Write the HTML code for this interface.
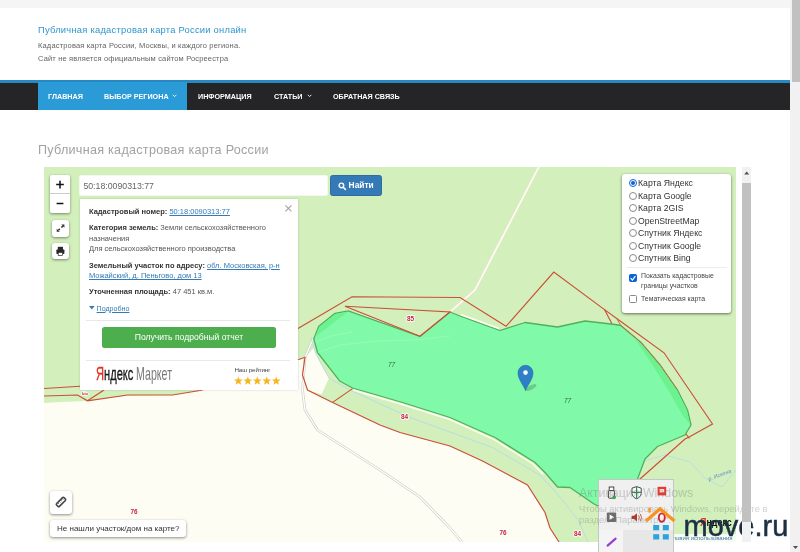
<!DOCTYPE html>
<html lang="ru">
<head>
<meta charset="utf-8">
<title>Публичная кадастровая карта России онлайн</title>
<style>
*{box-sizing:border-box;margin:0;padding:0}
html,body{width:800px;height:552px;overflow:hidden;background:#fff;font-family:"Liberation Sans",sans-serif;}
.abs{position:absolute}
#page{will-change:transform;position:relative;width:800px;height:552px;overflow:hidden;background:#fff}
#topstrip{left:0;top:0;width:790px;height:7.5px;background:#f5f5f5}
#oscroll{left:790px;top:0;width:10px;height:552px;background:#f1f1f1}
#oscroll .thumb{left:2px;top:0;width:8px;height:82px;background:#c1c1c1}
#title{left:38px;top:21.6px;font-size:9.4px;letter-spacing:0.23px;color:#2f96cf;white-space:nowrap;line-height:15px}
.sub{left:38px;font-size:7.5px;letter-spacing:0.16px;color:#646464;white-space:nowrap;line-height:12px}
#nav{left:0;top:79.700px;width:790px;height:30px;background:#252528;border-top:3px solid #2689c2}
#nav .act{left:38px;top:-1px;width:149px;height:28px;background:#2a9bd6}
#nav span{position:absolute;top:-1px;line-height:29px;font-size:7.2px;font-weight:bold;color:#fff;white-space:nowrap}
#h1{left:38px;top:141px;font-size:12.6px;letter-spacing:0.27px;color:#a2a2a2;white-space:nowrap;line-height:18px}
#map{left:44px;top:167px;width:692px;height:375px;background:#d3f0bc;overflow:hidden}
#iscroll{left:742px;top:167px;width:9px;height:375px;background:#f1f1f1}
#iscroll .thumb{left:0;top:16px;width:9px;height:339px;background:#c1c1c1}

.ctl{background:#fff;border-radius:2px;box-shadow:0 1px 3px rgba(0,0,0,.45)}
#zoom{left:50px;top:175px;width:20px;height:38px}
#zoom .ln{left:0;top:18px;width:20px;height:1px;background:#ccc}
#fs{left:52px;top:219.600px;width:17.400px;height:17.400px;border-radius:3px}
#pr{left:52.400px;top:243.200px;width:16.800px;height:16px;border-radius:3px}
#q{left:79px;top:174.600px;width:249px;height:21.200px;background:#fff;border:1px solid #f3f8ee;border-radius:2px;font-size:8.750px;color:#666;line-height:20.600px;padding-left:3.400px;white-space:nowrap}
#find{left:330px;top:175px;width:52px;height:21px;background:#337ab7;border:1px solid #2e6da4;border-radius:2.5px;color:#fff;font-size:8.4px;font-weight:bold;line-height:19px;white-space:nowrap}
#find span{position:absolute;left:17.6px;top:0}
#pop{left:80px;top:198.500px;width:218px;height:191.500px;background:#fff;box-shadow:0 0 2px rgba(0,0,0,.18)}
#pop .t{position:absolute;left:9px;font-size:7.5px;line-height:10.8px;color:#555;white-space:nowrap}
#pop>*{margin-top:.5px}
#pop b{color:#333}
#pop a{color:#337ab7;text-decoration:underline}
#pop .hr{position:absolute;left:6px;width:204px;height:1px;background:#e8e8e8}
#btn{left:22px;top:128px;width:174px;height:21px;background:#4cae4c;border-radius:2.5px;color:#fff;font-size:8.6px;line-height:21px;text-align:center;white-space:nowrap}
#layers{left:622px;top:173.5px;width:109px;height:139px;background:#fff;border-radius:3px;box-shadow:0 1px 3px rgba(0,0,0,.55)}
#layers .r{position:absolute;left:6.5px;width:8.2px;height:8.2px;border:1px solid #8a8a8a;border-radius:50%;background:#fff}
#layers .r.on{border-color:#0a64d8}
#layers .r.on:after{content:"";position:absolute;left:1.1px;top:1.1px;width:4px;height:4px;border-radius:50%;background:#0a64d8}
#layers .l{position:absolute;left:16px;font-size:8.7px;line-height:12px;color:#333;white-space:nowrap}
#layers .s{position:absolute;left:19px;font-size:6.9px;line-height:10px;color:#444;white-space:nowrap}
#layers .c{position:absolute;left:6.5px;width:8px;height:8px;border:1px solid #8a8a8a;border-radius:1.5px;background:#fff}
#layers .c.on{background:#0a64d8;border-color:#0a64d8}
#ruler{left:50px;top:491px;width:22px;height:23px;border-radius:3px}
#nf{left:50px;top:520px;width:136px;height:17px;border-radius:3px;font-size:8.03px;line-height:17px;color:#333;padding-left:7px;white-space:nowrap}

#wm{left:579px;top:484.6px;color:rgba(105,110,110,.32);white-space:nowrap}
#tray{left:598px;top:478.5px;width:76px;height:80px;background:#eff0ef;border:1px solid #c3c8c6}
#ylogo{left:699.5px;top:515.5px;font-size:10.6px;font-weight:bold;line-height:13px;color:#111;white-space:nowrap;transform:scaleX(.84);transform-origin:0 0}
#terms{left:650px;top:534px;width:86px;height:8px;background:rgba(255,255,255,.8);font-size:6px;line-height:8px;color:#4a78b0;white-space:nowrap;padding-left:16px}
#mv{left:683.5px;top:508px;font-size:29px;line-height:36px;color:#1b3042;white-space:nowrap;letter-spacing:0;-webkit-text-stroke:.5px #1b3042}
</style>
</head>
<body>
<div id="page">
<div id="topstrip" class="abs"></div>
<div id="title" class="abs">Публичная кадастровая карта России онлайн</div>
<div class="sub abs" style="top:39.8px">Кадастровая карта России, Москвы, и каждого региона.</div>
<div class="sub abs" style="top:52.9px">Сайт не является официальным сайтом Росреестра</div>
<div id="nav" class="abs">
  <div class="act abs"></div>
  <span style="left:48px">ГЛАВНАЯ</span>
  <span style="left:104px">ВЫБОР РЕГИОНА</span>
  <span style="left:198px">ИНФОРМАЦИЯ</span>
  <span style="left:274px">СТАТЬИ</span>
  <span style="left:333px">ОБРАТНАЯ СВЯЗЬ</span>
  <svg class="abs" style="left:170.800px;top:10.300px" width="8" height="6"><path d="M1.800 1.800l1.800 1.800 1.800-1.800" fill="none" stroke="#fff" stroke-width=".9"/></svg>
  <svg class="abs" style="left:305.800px;top:10.300px" width="8" height="6"><path d="M1.800 1.800l1.800 1.800 1.800-1.800" fill="none" stroke="#fff" stroke-width=".9"/></svg>
</div>
<div id="h1" class="abs">Публичная кадастровая карта России</div>
<div id="map" class="abs">
<!--MAPSVG_START-->
<svg class="abs" style="left:0;top:0" width="692" height="375" viewBox="44 167 692 375">
<!-- cream lowland -->
<polygon fill="#fdfdf4" points="44,403 60,402 87.5,401 127.5,395.5 172.5,395 200,390.5 250,376 298,359.5 305,357.5 303,376 307,390 332.6,402.4 380,425 400,432.5 450,446 482.5,461 527.5,485 545,512.5 550,528 559,542 44,542"/>
<!-- cream field -->
<polygon fill="#fdfdf4" points="305,357.5 313.5,348 320,362 329,378 321.7,394.3 307,390 303,376"/>
<!-- grey roads (cream area) -->
<g fill="none" stroke-linejoin="round" stroke-linecap="round">
<polyline stroke="#cfcac4" stroke-width="2.6" points="312.5,340 305,357.5 302.5,390 305,410 317.5,430 380,470 420,497 450,528 462,542"/>
<polyline stroke="#ffffff" stroke-width="1.4" points="312.5,340 305,357.5 302.5,390 305,410 317.5,430 380,470 420,497 450,528 462,542"/>
<!-- white road top -->
<polyline stroke="#e9e3cf" stroke-width="2.6" points="538.8,167 475,290 450,312 420,336.3"/>
<polyline stroke="#fffdf6" stroke-width="1.6" points="538.8,167 475,290 450,312 420,336.3"/>
<polyline stroke="#fffdf6" stroke-width="1.6" points="420,336.3 385,323 348,311"/>
<!-- stream -->
<polyline stroke="#b9dbe6" stroke-width="1" points="311,338 316,354 329,378 352,391 410,417.5 492.5,447.5 540,475 560,497 578,520 588,542"/>
<polyline stroke="#b9dbe6" stroke-width="0.9" points="640,462 665,455 690,462 705,478 722,487 736,470"/>
</g>
<polyline fill="none" stroke="#fffdf6" stroke-width="1.800" points="461,314.800 499,328.600"/>
<!-- main selected parcel -->
<polygon fill="#80faa8" stroke="#4fb05c" stroke-width="1.3" stroke-linejoin="round" points="348.3,310.8 420,336.3 450,312 460,316 500,330.5 525,322.5 557.5,327 585,321 615,324.5 620.8,325.5 641,342.5 660.5,365.5 677.5,390 687.5,410 691,425 685,435 657.5,446.5 645,459 637.5,479 618,516 594,504 570,487.5 557.5,487 545,472.5 535,462.5 495,437.5 450,417.5 402.5,402.5 352.5,388 340,381.3 317.5,352.5 313.8,338.8 318.8,326.3 335,313.3"/>
<polygon fill="#6cf28f" points="348.3,311.4 335.4,314 319.6,326.6 315,337 "/>
<polygon fill="#6cf28f" points="634,337 641,343 660,366 677,390.4 686.8,410 690,424 683,416 670,393 653,366"/>
<g fill="none" stroke="#fff" stroke-opacity=".16" stroke-width="1"><polyline points="317.500,352.500 340,345 377.500,341 415,340 450,336"/><polyline points="315,342.500 330,336 352,332"/></g>
<!-- white road along lower edge -->
<polyline fill="none" stroke="#fffdf6" stroke-width="1.4" points="353,390 402.5,404.5 450,419.5 494,439.5 533,464 543,474"/>
<g fill="none" stroke="#cc4e36" stroke-width="1.15" stroke-linejoin="miter">
<polyline points="280,338 298.8,328 352,296.8 460,297.5 506,326.3 553.8,272 604.5,309.6 616.7,318.5 664,352.8 712.5,424 690,436.5 685,439 640,479 600,514"/>
<polygon points="345,306.3 450,312 420,336.3"/>
<polyline points="604.5,309.6 611.8,323.6"/>
<polyline points="616.7,318.5 620.8,325.5 641,342.5 660.5,365.5 677.5,390" stroke="#b9793f" stroke-width="1"/>
<polyline points="686,434 689.5,438.5"/>
<polyline points="296,360 298.8,359.5 305,357.3 302.5,375 307.5,390 332.6,402.4 380,425 400,432.5 450,446 482.5,461 527.5,485 545,512.5 550,528 559,542"/>
<polyline points="332.6,402.4 352.5,388.6"/>
<polyline points="44,396 77.5,395 87.5,400.8 127.5,395 172.5,395 200,390.5 230,383"/>
<polyline points="44,388.5 80,386.2"/>
<polyline points="87.5,400.8 102.5,391 108,386"/>
</g>
<!-- labels -->
<g font-family="Liberation Sans, sans-serif" font-size="6.4" font-weight="bold" text-anchor="middle" fill="#c41e3a" stroke="#fff" stroke-width="1.6" paint-order="stroke" stroke-linejoin="round">
<text x="410.5" y="320.6">85</text>
<text x="404.5" y="418.6">84</text>
<text x="134" y="513.6">76</text>
<text x="503" y="534.6">76</text>
<text x="577.5" y="535.8">84</text>
<text x="85" y="394.6" font-size="4">bio</text>
</g>
<g font-family="Liberation Sans, sans-serif" font-size="6.4" font-style="italic" text-anchor="middle" fill="#2b6b40">
<text x="391.5" y="367.4">77</text>
<text x="567.5" y="402.6">77</text>
</g>
<text x="709" y="481" font-family="Liberation Sans, sans-serif" font-size="5.4" font-style="italic" fill="#5b8fd0" transform="rotate(-21 709 481)">р. Искона</text>
<!-- marker -->
<ellipse cx="531" cy="387.5" rx="6" ry="2.2" fill="#000" opacity=".18" transform="rotate(-28 531 387.5)"/>
<path d="M525.5 390.5 C523.5 385 518 379.5 518 372.8 A7.5 7.5 0 0 1 533 372.8 C533 379.5 527.5 385 525.5 390.5Z" fill="#2e7fc6" stroke="#2569a8" stroke-width=".6"/>
<circle cx="525.5" cy="372.6" r="2.3" fill="#fff"/>
</svg>
<!--MAPSVG_END-->
</div>

<div id="zoom" class="abs ctl"><div class="ln abs"></div>
<svg class="abs" style="left:0;top:0" width="20" height="38"><path d="M6.2 9.6h7.6M10 5.8v7.6M6.6 28.4h6.8" stroke="#111" stroke-width="1.5" fill="none"/></svg></div>
<div id="fs" class="abs ctl"><svg class="abs" style="left:-1px;top:-.5px" width="19" height="18"><path d="M7.400 11.200L8.800 9.900M10.400 8.500L11.900 7.100" stroke="#333" stroke-width="1.500"/><path d="M10.300 5.600h3.100v3.100zM5.700 9.700v3.100h3.100z" fill="#333"/></svg></div>
<div id="pr" class="abs ctl"><svg class="abs" style="left:0;top:0" width="17" height="16"><rect x="4.400" y="6.400" width="8" height="4.600" rx=".8" fill="#2a2a2a"/><rect x="5.800" y="3.800" width="5.200" height="3.200" fill="#2a2a2a"/><rect x="6.200" y="9.400" width="4.400" height="3" fill="#fff" stroke="#2a2a2a" stroke-width=".7"/></svg></div>
<div id="q" class="abs">50:18:0090313:77</div>
<div id="find" class="abs"><svg class="abs" style="left:7px;top:5.500px" width="10" height="10"><circle cx="3.400" cy="3.400" r="2.300" fill="none" stroke="#fff" stroke-width="1.400"/><path d="M5.200 5.200L7.400 7.400" stroke="#fff" stroke-width="1.600" stroke-linecap="round"/></svg><span>Найти</span></div>
<div id="pop" class="abs">
<div class="t" style="top:8px"><b>Кадастровый номер:</b> <a>50:18:0090313:77</a></div>
<div class="t" style="top:23.8px"><b>Категория земель:</b> Земли сельскохозяйственного<br>назначения<br>Для сельскохозяйственного производства</div>
<div class="t" style="top:61.6px"><b>Земельный участок по адресу:</b> <a>обл. Московская, р-н</a><br><a>Можайский, д. Пеньгово, дом 13</a></div>
<div class="t" style="top:87.9px"><b>Уточненная площадь:</b> 47 451 кв.м.</div>
<div class="t" style="top:104.9px;font-size:7.1px"><svg style="display:inline-block;vertical-align:1px;margin-right:2px" width="5.600" height="3.600"><path d="M0 0h5.600l-2.800 3.600z" fill="#337ab7"/></svg><a>Подробно</a></div>
<svg class="abs" style="left:203px;top:4px" width="11" height="11"><path d="M2.4 2.4l6 6M8.4 2.4l-6 6" stroke="#a4a4a4" stroke-width="1.150" fill="none"/></svg>
<div class="hr" style="top:120.5px"></div>
<div id="btn" class="abs">Получить подробный отчет</div>
<div class="hr" style="top:160.5px"></div>
<div class="abs" style="left:15.5px;top:163.6px;font-size:18.5px;line-height:22px;white-space:nowrap;transform:scaleX(.60);transform-origin:0 0;color:#1a1a1a;-webkit-text-stroke:.35px #1a1a1a"><span style="color:#e2301f;-webkit-text-stroke:.35px #e2301f">Я</span>ндекс</div>
<div class="abs" style="left:55.6px;top:163.6px;font-size:18.5px;line-height:22px;white-space:nowrap;transform:scaleX(.575);transform-origin:0 0;color:#7a7a7a">Маркет</div>
<div class="abs" style="left:154.5px;top:167px;font-size:6.2px;line-height:8px;color:#444;white-space:nowrap;letter-spacing:-.1px">Наш рейтинг</div>
<svg class="abs" style="left:154px;top:176.500px" width="50" height="11" fill="#f6b620"><polygon points="4.40,0.40 5.58,3.38 8.77,3.58 6.30,5.62 7.10,8.72 4.40,7.00 1.70,8.72 2.50,5.62 0.03,3.58 3.22,3.38"/><polygon points="13.85,0.40 15.03,3.38 18.22,3.58 15.75,5.62 16.55,8.72 13.85,7.00 11.15,8.72 11.95,5.62 9.48,3.58 12.67,3.38"/><polygon points="23.30,0.40 24.48,3.38 27.67,3.58 25.20,5.62 26.00,8.72 23.30,7.00 20.60,8.72 21.40,5.62 18.93,3.58 22.12,3.38"/><polygon points="32.75,0.40 33.93,3.38 37.12,3.58 34.65,5.62 35.45,8.72 32.75,7.00 30.05,8.72 30.85,5.62 28.38,3.58 31.57,3.38"/><polygon points="42.20,0.40 43.38,3.38 46.57,3.58 44.10,5.62 44.90,8.72 42.20,7.00 39.50,8.72 40.30,5.62 37.83,3.58 41.02,3.38"/></svg>
</div>
<div id="layers" class="abs">
<div class="r on" style="top:5.6px"></div><div class="l" style="top:3.6px">Карта Яндекс</div>
<div class="r" style="top:18.1px"></div><div class="l" style="top:16.1px">Карта Google</div>
<div class="r" style="top:30.6px"></div><div class="l" style="top:28.6px">Карта 2GIS</div>
<div class="r" style="top:43.1px"></div><div class="l" style="top:41.1px">OpenStreetMap</div>
<div class="r" style="top:55.6px"></div><div class="l" style="top:53.6px">Спутник Яндекс</div>
<div class="r" style="top:68.1px"></div><div class="l" style="top:66.1px">Спутник Google</div>
<div class="r" style="top:80.4px"></div><div class="l" style="top:78.4px">Спутник Bing</div>
<div class="abs" style="left:4px;top:93.500px;width:101px;height:1px;background:#ececec"></div>
<div class="c on" style="top:100.2px"><svg class="abs" style="left:-1px;top:-1px" width="8" height="8"><path d="M1.6 4.2l1.8 1.8 3-3.8" stroke="#fff" stroke-width="1.2" fill="none"/></svg></div>
<div class="s" style="top:97.4px">Показать кадастровые<br>границы участков</div>
<div class="c" style="top:121.300px"></div>
<div class="s" style="top:120.300px">Тематическая карта</div>
</div>
<div id="ruler" class="abs ctl"><svg class="abs" style="left:0;top:0" width="22" height="22"><g transform="rotate(-45 11 11)"><rect x="5.800" y="9" width="10.400" height="4" rx="1" fill="#fff" stroke="#444" stroke-width="1.600"/><path d="M8.200 9v2M10.200 9v2M12.200 9v2M14.200 9v2" stroke="#444" stroke-width=".7"/></g></svg></div>
<div id="nf" class="abs ctl">Не нашли участок/дом на карте?</div>

<div id="terms" class="abs">Условия использования</div>
<div id="ylogo" class="abs"><span style="color:#e8301c">Я</span>ндекс</div>
<div id="tray" class="abs">
<div class="abs" style="left:0;top:50px;width:74px;height:30px;background:#e6e7e6"></div><div class="abs" style="left:0;top:50px;width:23.500px;height:30px;background:#f3f4f3"></div>
<svg class="abs" style="left:0;top:0" width="76" height="74">
<!-- usb -->
<rect x="10.2" y="7" width="4.6" height="4" fill="#fff" stroke="#333" stroke-width=".9"/><rect x="9.4" y="10.6" width="6.2" height="7.6" rx="1" fill="#e9e9e9" stroke="#333" stroke-width=".9"/><circle cx="15.2" cy="17.4" r="1.8" fill="#3aa845"/>
<!-- shield -->
<path d="M33 8.2l4.6-1.6 4.6 1.6v5.2c0 2.6-2.2 4.4-4.6 5.4-2.4-1-4.600-2.800-4.600-5.400z" fill="#fff" stroke="#333" stroke-width=".9"/><path d="M37.600 6.800v11.600M33 12.400h9.200" stroke="#2c8a57" stroke-width="1.2"/>
<!-- red -->
<rect x="58.600" y="6.800" width="8.600" height="8.600" fill="#e8392f"/><rect x="60.600" y="9" width="4.600" height="3.400" fill="#fff" opacity=".85"/>
<!-- play -->
<rect x="7.800" y="32.600" width="9.400" height="9.400" rx="1" fill="#6d6d6d"/><path d="M10.600 34.600l4.600 2.600-4.600 2.600z" fill="#fff"/>
<!-- speaker -->
<path d="M32.600 35.800h2.400l3-2.600v8.400l-3-2.600h-2.400z" fill="#b0392c"/><path d="M39.600 35.200q1.400 2.200 0 4.400M41.400 34q2.200 3.400 0 6.800" stroke="#c0392b" stroke-width=".8" fill="none"/>
<!-- opera -->
<ellipse cx="62.800" cy="37.600" rx="3" ry="4.200" fill="none" stroke="#d6202a" stroke-width="1.800"/>
<!-- pen -->
<path d="M8.600 65.600l8-7" stroke="#9a3fd0" stroke-width="2.200" stroke-linecap="round"/>
</svg>
</div>
<div id="wm" class="abs"><div style="font-size:12.4px;line-height:17px">Активация Windows</div><div style="font-size:9.4px;line-height:11.3px;margin-top:1px">Чтобы активировать Windows, перейдите в<br>раздел "Параметры".</div></div>
<svg class="abs" style="left:640px;top:499px" width="50" height="45">
<path d="M6 22L20 9.800 34.500 22" fill="none" stroke="#f7931e" stroke-width="3.200"/><rect x="8.400" y="8.600" width="2.200" height="5" fill="#f7931e"/>
<rect x="13.200" y="26" width="6" height="5.300" fill="#2ba3dc"/><rect x="22.800" y="26" width="6" height="5.300" fill="#2ba3dc"/><rect x="13.200" y="35.200" width="6" height="5.300" fill="#2ba3dc"/><rect x="22.800" y="35.200" width="6" height="5.300" fill="#2ba3dc"/>
</svg>
<div id="mv" class="abs">move.ru</div>
<div id="iscroll" class="abs"><div class="thumb abs"></div><svg class="abs" style="left:0;top:0" width="9" height="12"><path d="M2.200 7.500h5l-2.500-3z" fill="#505050"/></svg></div>
<div id="oscroll" class="abs"><div class="thumb abs"></div><svg class="abs" style="left:0;top:542px" width="10" height="10"><path d="M3 4h5l-2.500 3z" fill="#505050"/></svg></div>
</div>
</body>
</html>
